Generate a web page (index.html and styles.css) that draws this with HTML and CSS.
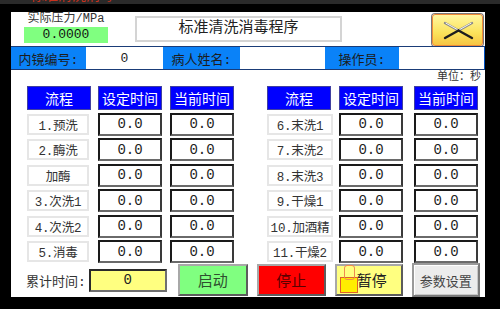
FILE: index.html
```html
<!DOCTYPE html>
<html lang="zh">
<head>
<meta charset="utf-8">
<link rel="stylesheet" href="styles.css">
</head>
<body>
<div class="topbar"><span class="topbar-text">标准清洗消毒</span></div>
<div class="screen">
  <div class="panel">
    <div class="top">
      <div class="pressure">
        <div class="pressure-label">实际压力/MPa</div>
        <div class="pressure-value">0.0000</div>
      </div>
      <div class="title">标准清洗消毒程序</div>
      <div class="close">
        <svg width="51" height="32" viewBox="0 0 51 32">
          <g stroke-width="2.4" stroke-linecap="round" stroke="#8a8a8a">
            <line x1="13" y1="9" x2="26.5" y2="16.5"/>
            <line x1="40" y1="9" x2="26.5" y2="16.5"/>
          </g>
          <g stroke-width="1" stroke-linecap="round" stroke="#f4f4f4">
            <line x1="14" y1="9.2" x2="26" y2="15.9"/>
            <line x1="39" y1="9.2" x2="27" y2="15.9"/>
          </g>
          <g stroke-width="2.4" stroke-linecap="round" stroke="#1e1e1e">
            <line x1="26.5" y1="16.5" x2="13" y2="24"/>
            <line x1="26.5" y1="16.5" x2="40" y2="24"/>
          </g>
        </svg>
      </div>
    </div>
    <div class="info">
      <div class="info-label w75">内镜编号:</div>
      <div class="info-value w77">0</div>
      <div class="info-label w77">病人姓名:</div>
      <div class="info-value w85"></div>
      <div class="info-label w74">操作员:</div>
      <div class="info-value w86"></div>
    </div>
    <div class="unit">单位：秒</div>
    <div class="tables">
      <div class="grid grid-left">
        <div class="head">流程</div><div class="head">设定时间</div><div class="head">当前时间</div>
        <div class="lab">1.预洗</div><div class="val">0.0</div><div class="val">0.0</div>
        <div class="lab">2.酶洗</div><div class="val">0.0</div><div class="val">0.0</div>
        <div class="lab">加酶</div><div class="val">0.0</div><div class="val">0.0</div>
        <div class="lab">3.次洗1</div><div class="val">0.0</div><div class="val">0.0</div>
        <div class="lab">4.次洗2</div><div class="val">0.0</div><div class="val">0.0</div>
        <div class="lab">5.消毒</div><div class="val">0.0</div><div class="val">0.0</div>
      </div>
      <div class="grid grid-right">
        <div class="head">流程</div><div class="head">设定时间</div><div class="head">当前时间</div>
        <div class="lab">6.末洗1</div><div class="val">0.0</div><div class="val">0.0</div>
        <div class="lab">7.末洗2</div><div class="val">0.0</div><div class="val">0.0</div>
        <div class="lab">8.末洗3</div><div class="val">0.0</div><div class="val">0.0</div>
        <div class="lab">9.干燥1</div><div class="val">0.0</div><div class="val">0.0</div>
        <div class="lab">10.加酒精</div><div class="val">0.0</div><div class="val">0.0</div>
        <div class="lab">11.干燥2</div><div class="val">0.0</div><div class="val">0.0</div>
      </div>
    </div>
    <div class="bottom">
      <div class="total-label">累计时间:</div>
      <div class="total-value">0</div>
      <div class="btn btn-start">启动</div>
      <div class="btn btn-stop">停止</div>
      <div class="btn btn-pause">
        <span class="mark mark-low"></span>
        <span class="mark mark-up"></span>
        暂停
      </div>
      <div class="btn btn-param">参数设置</div>
    </div>
  </div>
</div>
</body>
</html>
```

FILE: styles.css
```css
* { box-sizing: border-box; }
html, body { margin: 0; padding: 0; }
body {
  width: 500px;
  height: 309px;
  background: #000;
  overflow: hidden;
  font-family: "Liberation Mono", "Noto Sans CJK SC", monospace;
  color: #222;
}
.topbar {
  height: 4px;
  background: #2a2a2a;
  overflow: hidden;
  padding-left: 30px;
}
.topbar-text {
  display: block;
  margin-top: -11px;
  font-size: 14px;
  line-height: 14px;
  color: #c8321e;
}
.screen {
  padding: 8px 0 0 11px;
}
.panel {
  width: 474px;
  height: 285px;
  background: #fff;
  display: flex;
  flex-direction: column;
}
.top {
  height: 34px;
  display: flex;
  align-items: flex-start;
}
.pressure {
  margin-left: 13px;
  width: 84px;
  display: flex;
  flex-direction: column;
  align-items: center;
}
.pressure-label {
  height: 15px;
  line-height: 15px;
  font-size: 12px;
  color: #333;
  white-space: nowrap;
}
.pressure-value {
  width: 84px;
  height: 16px;
  line-height: 16px;
  background: #80ff80;
  text-align: center;
  font-size: 13px;
  color: #111;
}
.title {
  margin-left: 27px;
  margin-top: 4px;
  width: 207px;
  height: 26px;
  border: 2px solid #d4d4d4;
  text-align: center;
  line-height: 22px;
  font-size: 15px;
  color: #222;
}
.close {
  margin-left: 90px;
  margin-top: 2px;
  width: 51px;
  height: 32px;
  border: 1px solid #ef8a38;
  border-radius: 3px;
  background: linear-gradient(#fff7a0, #fbe25a 60%, #f6c443);
  box-shadow: 0 0 0 1px #7a7a7a;
  overflow: hidden;
}
.close svg { display: block; margin: -1px; }
.info {
  height: 24px;
  display: flex;
  border-top: 1px solid #1a3c78;
  border-bottom: 1px solid #1a3c78;
  border-right: 1px solid #0050c0;
}
.info-label, .info-value {
  height: 100%;
  display: flex;
  align-items: center;
  justify-content: center;
  font-size: 13px;
  white-space: nowrap;
}
.info-label { background: #0a82f8; color: #1c1c1c; }
.info-value { background: #fff; color: #222; }
.w74 { width: 74px; }
.w75 { width: 75px; }
.w77 { width: 77px; }
.w85 { width: 85px; }
.w86 { width: 85px; }
.unit {
  height: 16px;
  line-height: 13px;
  padding-top: 1px;
  text-align: right;
  padding-right: 4px;
  font-size: 11px;
  color: #333;
}
.tables {
  display: flex;
  padding-left: 16px;
  gap: 33px;
}
.grid {
  display: grid;
  grid-template-rows: 24px repeat(6, 23px);
  row-gap: 2.5px;
  align-items: center;
}
.grid-left { grid-template-columns: 71px 72px 64px; }
.grid-right { grid-template-columns: 72px 75px 64px; }
.head {
  width: 64px;
  height: 24px;
  background: #0000ff;
  color: #fff;
  font-size: 14px;
  display: flex;
  align-items: center;
  justify-content: center;
  border: 1px solid #4040a0;
}
.lab {
  width: 62px;
  height: 21px;
  border: 2px solid #e6e6e6;
  display: flex;
  align-items: center;
  justify-content: center;
  font-size: 12.5px;
  letter-spacing: -0.2px;
  color: #333;
  white-space: nowrap;
}
.grid-right .lab { width: 66px; }
.val {
  width: 64px;
  height: 23px;
  border: 2px solid;
  border-color: #1a1a1a #3a3a3a #6a6a6a #1a1a1a;
  display: flex;
  align-items: center;
  justify-content: center;
  font-size: 14px;
  color: #222;
}
.bottom {
  height: 34px;
  display: flex;
  align-items: center;
  padding-left: 15px;
}
.total-label {
  font-size: 13px;
  color: #333;
  white-space: nowrap;
}
.total-value {
  margin-left: 3px;
  width: 78px;
  height: 23px;
  background: #ffff80;
  border: 2px solid;
  border-color: #2a2a2a #707070 #707070 #2a2a2a;
  display: flex;
  align-items: center;
  justify-content: center;
  font-size: 14px;
}
.btn {
  position: relative;
  height: 32px;
  display: flex;
  align-items: center;
  justify-content: center;
  font-size: 15px;
  border: 2px solid;
  border-color: #a8a8a8 #5c5c5c #5c5c5c #a8a8a8;
}
.btn-start {
  margin-left: 11px;
  width: 70px;
  background: #80ff80;
  color: #2f4f2f;
}
.btn-stop {
  margin-left: 9px;
  width: 69px;
  background: #ff0000;
  color: #5a0000;
}
.btn-pause {
  margin-left: 9px;
  width: 68px;
  background: #ffff80;
  color: #222;
  padding-left: 6px;
}
.btn-param {
  margin-left: 9px;
  width: 68px;
  height: 34px;
  background: #ececec;
  color: #444;
  font-size: 13px;
  border-color: #9a9a9a #7a7a7a #7a7a7a #9a9a9a;
  box-shadow: inset 1px 1px 0 #fff, inset -1px -1px 0 #c8c8c8;
}
.mark {
  position: absolute;
  display: block;
}
.mark-low {
  left: 3px;
  top: 11px;
  width: 18px;
  height: 16px;
  background: #ffee00;
  border: 1px solid #e0602a;
}
.mark-up {
  left: 7px;
  top: -1px;
  width: 11px;
  height: 15px;
  border: 1px solid #f08a50;
  border-radius: 3px;
}
```
